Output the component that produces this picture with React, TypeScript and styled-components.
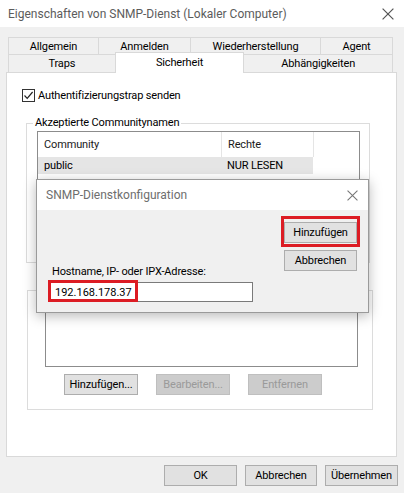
import React from "react";
import styled, { createGlobalStyle } from "styled-components";

const GlobalStyle = createGlobalStyle`
  html, body { margin: 0; padding: 0; background: #f0f0f0; }
  body { font-family: Roboto, "Liberation Sans", sans-serif; font-size: 11px; letter-spacing: -0.15px; color: #000; }
  * { box-sizing: border-box; }
`;

const Window = styled.div`
  position: relative;
  width: 404px;
  height: 493px;
  background: #f0f0f0;
  display: flex;
  flex-direction: column;
  overflow: hidden;
`;

const TitleBar = styled.div`
  height: 27px;
  flex: none;
  background: #fff;
  display: flex;
  align-items: center;
  justify-content: space-between;
  padding: 0 10px 0 8px;
`;

const TitleText = styled.span`
  font-size: 12px;
  letter-spacing: 0;
  color: #5c5c5c;
`;

const Tabs = styled.div`
  margin: 10px 0 0 8px;
  width: 385px;
  display: flex;
  flex-direction: column;
  position: relative;
  z-index: 1;
`;

const TabRow = styled.div<{ $h: number }>`
  display: flex;
  height: ${(p) => p.$h}px;
  align-items: flex-end;
`;

const Tab = styled.div<{ $w: number; $active?: boolean; $first?: boolean }>`
  width: ${(p) => p.$w}px;
  height: ${(p) => (p.$active ? "21px" : "100%")};
  margin-left: ${(p) => (p.$first ? "0" : "-1px")};
  margin-bottom: ${(p) => (p.$active ? "-1px" : "0")};
  border: 1px solid #d9d9d9;
  border-bottom: none;
  background: ${(p) => (p.$active ? "#fff" : "#f0f0f0")};
  display: flex;
  align-items: center;
  justify-content: center;
  padding-bottom: ${(p) => (p.$active ? "2px" : "0")};
  position: relative;
  z-index: ${(p) => (p.$active ? 2 : 1)};
  color: #000;
`;

const Panel = styled.div`
  margin: 0 7px 0 6px;
  height: 385px;
  flex: none;
  background: #fff;
  border: 1px solid #d9d9d9;
  display: flex;
  flex-direction: column;
`;

const CheckRow = styled.div`
  margin: 16px 0 0 15px;
  display: flex;
  align-items: center;
  gap: 3px;
  height: 13px;
`;

const CheckBox = styled.div`
  width: 13px;
  height: 13px;
  border: 1px solid #333;
  background: #fff;
  display: flex;
  align-items: center;
  justify-content: center;
`;

const Group = styled.div<{ $ml: number; $mt: number; $w: number; $h: number }>`
  position: relative;
  margin: ${(p) => p.$mt}px 0 0 ${(p) => p.$ml}px;
  width: ${(p) => p.$w}px;
  height: ${(p) => p.$h}px;
  flex: none;
  border: 1px solid #dcdcdc;
  display: flex;
  flex-direction: column;
`;

const Legend = styled.span`
  position: absolute;
  left: 6px;
  top: -8px;
  padding: 0 2px;
  background: #fff;
  line-height: 14px;
  color: #000;
`;

const ListBox = styled.div<{ $ml: number; $mt: number; $w: number; $h: number }>`
  margin: ${(p) => p.$mt}px 0 0 ${(p) => p.$ml}px;
  width: ${(p) => p.$w}px;
  height: ${(p) => p.$h}px;
  flex: none;
  border: 1px solid #8c8c8c;
  background: #fff;
  display: flex;
  flex-direction: column;
`;

const ListHeader = styled.div`
  display: flex;
  height: 25px;
`;

const HeaderCell = styled.div<{ $w: number }>`
  width: ${(p) => p.$w}px;
  padding-left: 6px;
  display: flex;
  align-items: center;
  border-right: 1px solid #e5e5e5;
  color: #1a1a1a;
`;

const ListRow = styled.div<{ $selected?: boolean }>`
  display: flex;
  height: 17px;
  width: 275px;
  background: ${(p) => (p.$selected ? "#e5e5e5" : "transparent")};
`;

const Cell = styled.div<{ $w: number }>`
  width: ${(p) => p.$w}px;
  padding-left: 6px;
  display: flex;
  align-items: center;
`;

const ButtonRow = styled.div<{ $ml: number; $mt: number }>`
  display: flex;
  gap: 18px;
  margin: ${(p) => p.$mt}px 0 0 ${(p) => p.$ml}px;
`;

const Button = styled.div<{ $w?: number; $disabled?: boolean }>`
  width: ${(p) => p.$w ?? 73}px;
  height: 21px;
  flex: none;
  border: 1px solid ${(p) => (p.$disabled ? "#bfbfbf" : "#adadad")};
  background: ${(p) => (p.$disabled ? "#cccccc" : "#e1e1e1")};
  color: ${(p) => (p.$disabled ? "#9a9a9a" : "#000")};
  display: flex;
  align-items: center;
  justify-content: center;
  position: relative;
`;

const Footer = styled.div`
  margin-top: 8px;
  padding-right: 6px;
  display: flex;
  justify-content: flex-end;
  gap: 8px;
`;

const Dialog = styled.div`
  position: absolute;
  left: 36px;
  top: 179px;
  width: 333px;
  height: 134px;
  border: 1px solid #9a9a9a;
  background: #f0f0f0;
  box-shadow: 0 3px 12px rgba(0, 0, 0, 0.28);
  display: flex;
  flex-direction: column;
  z-index: 5;
`;

const DialogTitle = styled.div`
  height: 30px;
  flex: none;
  background: #fff;
  display: flex;
  align-items: center;
  justify-content: space-between;
  padding: 0 10px 0 9px;
`;

const DialogTitleText = styled.span`
  font-size: 12px;
  letter-spacing: 0;
  color: #6e6e6e;
`;

const DialogBody = styled.div`
  flex: 1;
  display: flex;
  justify-content: space-between;
  padding: 12px 11px 0 11px;
`;

const LeftCol = styled.div`
  margin-top: 43px;
  display: flex;
  flex-direction: column;
`;

const FieldLabel = styled.div`
  line-height: 14px;
  padding-left: 4px;
`;

const Input = styled.div`
  position: relative;
  margin-top: 3px;
  width: 205px;
  height: 20px;
  border: 1px solid #7a7a7a;
  background: #fff;
  display: flex;
  align-items: center;
  padding-left: 6px;
  letter-spacing: 0;
`;

const RightCol = styled.div`
  display: flex;
  flex-direction: column;
  gap: 7px;
`;

const Highlight = styled.div<{ $t: number; $r: number; $b: number; $l: number }>`
  position: absolute;
  top: ${(p) => p.$t}px;
  right: ${(p) => p.$r}px;
  bottom: ${(p) => p.$b}px;
  left: ${(p) => p.$l}px;
  border: 3px solid #dc1c24;
  pointer-events: none;
`;

const CloseIcon = ({ size, color }: { size: number; color: string }) => (
  <svg width={size} height={size} viewBox="0 0 10 10">
    <path d="M0.5 0.5 L9.5 9.5 M9.5 0.5 L0.5 9.5" stroke={color} strokeWidth="1" fill="none" />
  </svg>
);

export default function App() {
  return (
    <>
      <GlobalStyle />
      <Window>
        <TitleBar>
          <TitleText>Eigenschaften von SNMP-Dienst (Lokaler Computer)</TitleText>
          <CloseIcon size={12} color="#555" />
        </TitleBar>
        <Tabs>
          <TabRow $h={17}>
            <Tab $w={91} $first>Allgemein</Tab>
            <Tab $w={93}>Anmelden</Tab>
            <Tab $w={131}>Wiederherstellung</Tab>
            <Tab $w={73}>Agent</Tab>
          </TabRow>
          <TabRow $h={18}>
            <Tab $w={108} $first>Traps</Tab>
            <Tab $w={130} $active>Sicherheit</Tab>
            <Tab $w={150}>Abhängigkeiten</Tab>
          </TabRow>
        </Tabs>
        <Panel>
          <CheckRow>
            <CheckBox>
              <svg width="11" height="11" viewBox="0 0 11 11">
                <path d="M1.5 5.5 L4.2 8.3 L9.6 2" stroke="#222" strokeWidth="1.2" fill="none" />
              </svg>
            </CheckBox>
            <span>Authentifizierungstrap senden</span>
          </CheckRow>
          <Group $ml={19} $mt={21} $w={344} $h={140}>
            <Legend>Akzeptierte Communitynamen</Legend>
            <ListBox $ml={10} $mt={7} $w={323} $h={95}>
              <ListHeader>
                <HeaderCell $w={184}>Community</HeaderCell>
                <HeaderCell $w={92}>Rechte</HeaderCell>
              </ListHeader>
              <ListRow $selected>
                <Cell $w={183}>public</Cell>
                <Cell $w={92}>NUR LESEN</Cell>
              </ListRow>
            </ListBox>
          </Group>
          <Group $ml={20} $mt={27} $w={346} $h={120}>
            <ListBox $ml={17} $mt={6} $w={313} $h={70} />
            <ButtonRow $ml={36} $mt={7}>
              <Button $w={74}>Hinzufügen...</Button>
              <Button $w={74} $disabled>Bearbeiten...</Button>
              <Button $w={74} $disabled>Entfernen</Button>
            </ButtonRow>
          </Group>
        </Panel>
        <Footer>
          <Button>OK</Button>
          <Button $w={72}>Abbrechen</Button>
          <Button>Übernehmen</Button>
        </Footer>

        <Dialog>
          <DialogTitle>
            <DialogTitleText>SNMP-Dienstkonfiguration</DialogTitleText>
            <CloseIcon size={11} color="#777" />
          </DialogTitle>
          <DialogBody>
            <LeftCol>
              <FieldLabel>Hostname, IP- oder IPX-Adresse:</FieldLabel>
              <Input>
                192.168.178.37
                <Highlight $t={-3} $l={-1} $b={-1} $r={114} />
              </Input>
            </LeftCol>
            <RightCol>
              <Button>
                Hinzufügen
                <Highlight $t={-7} $l={-4} $b={-5} $r={-4} />
              </Button>
              <Button>Abbrechen</Button>
            </RightCol>
          </DialogBody>
        </Dialog>
      </Window>
    </>
  );
}
